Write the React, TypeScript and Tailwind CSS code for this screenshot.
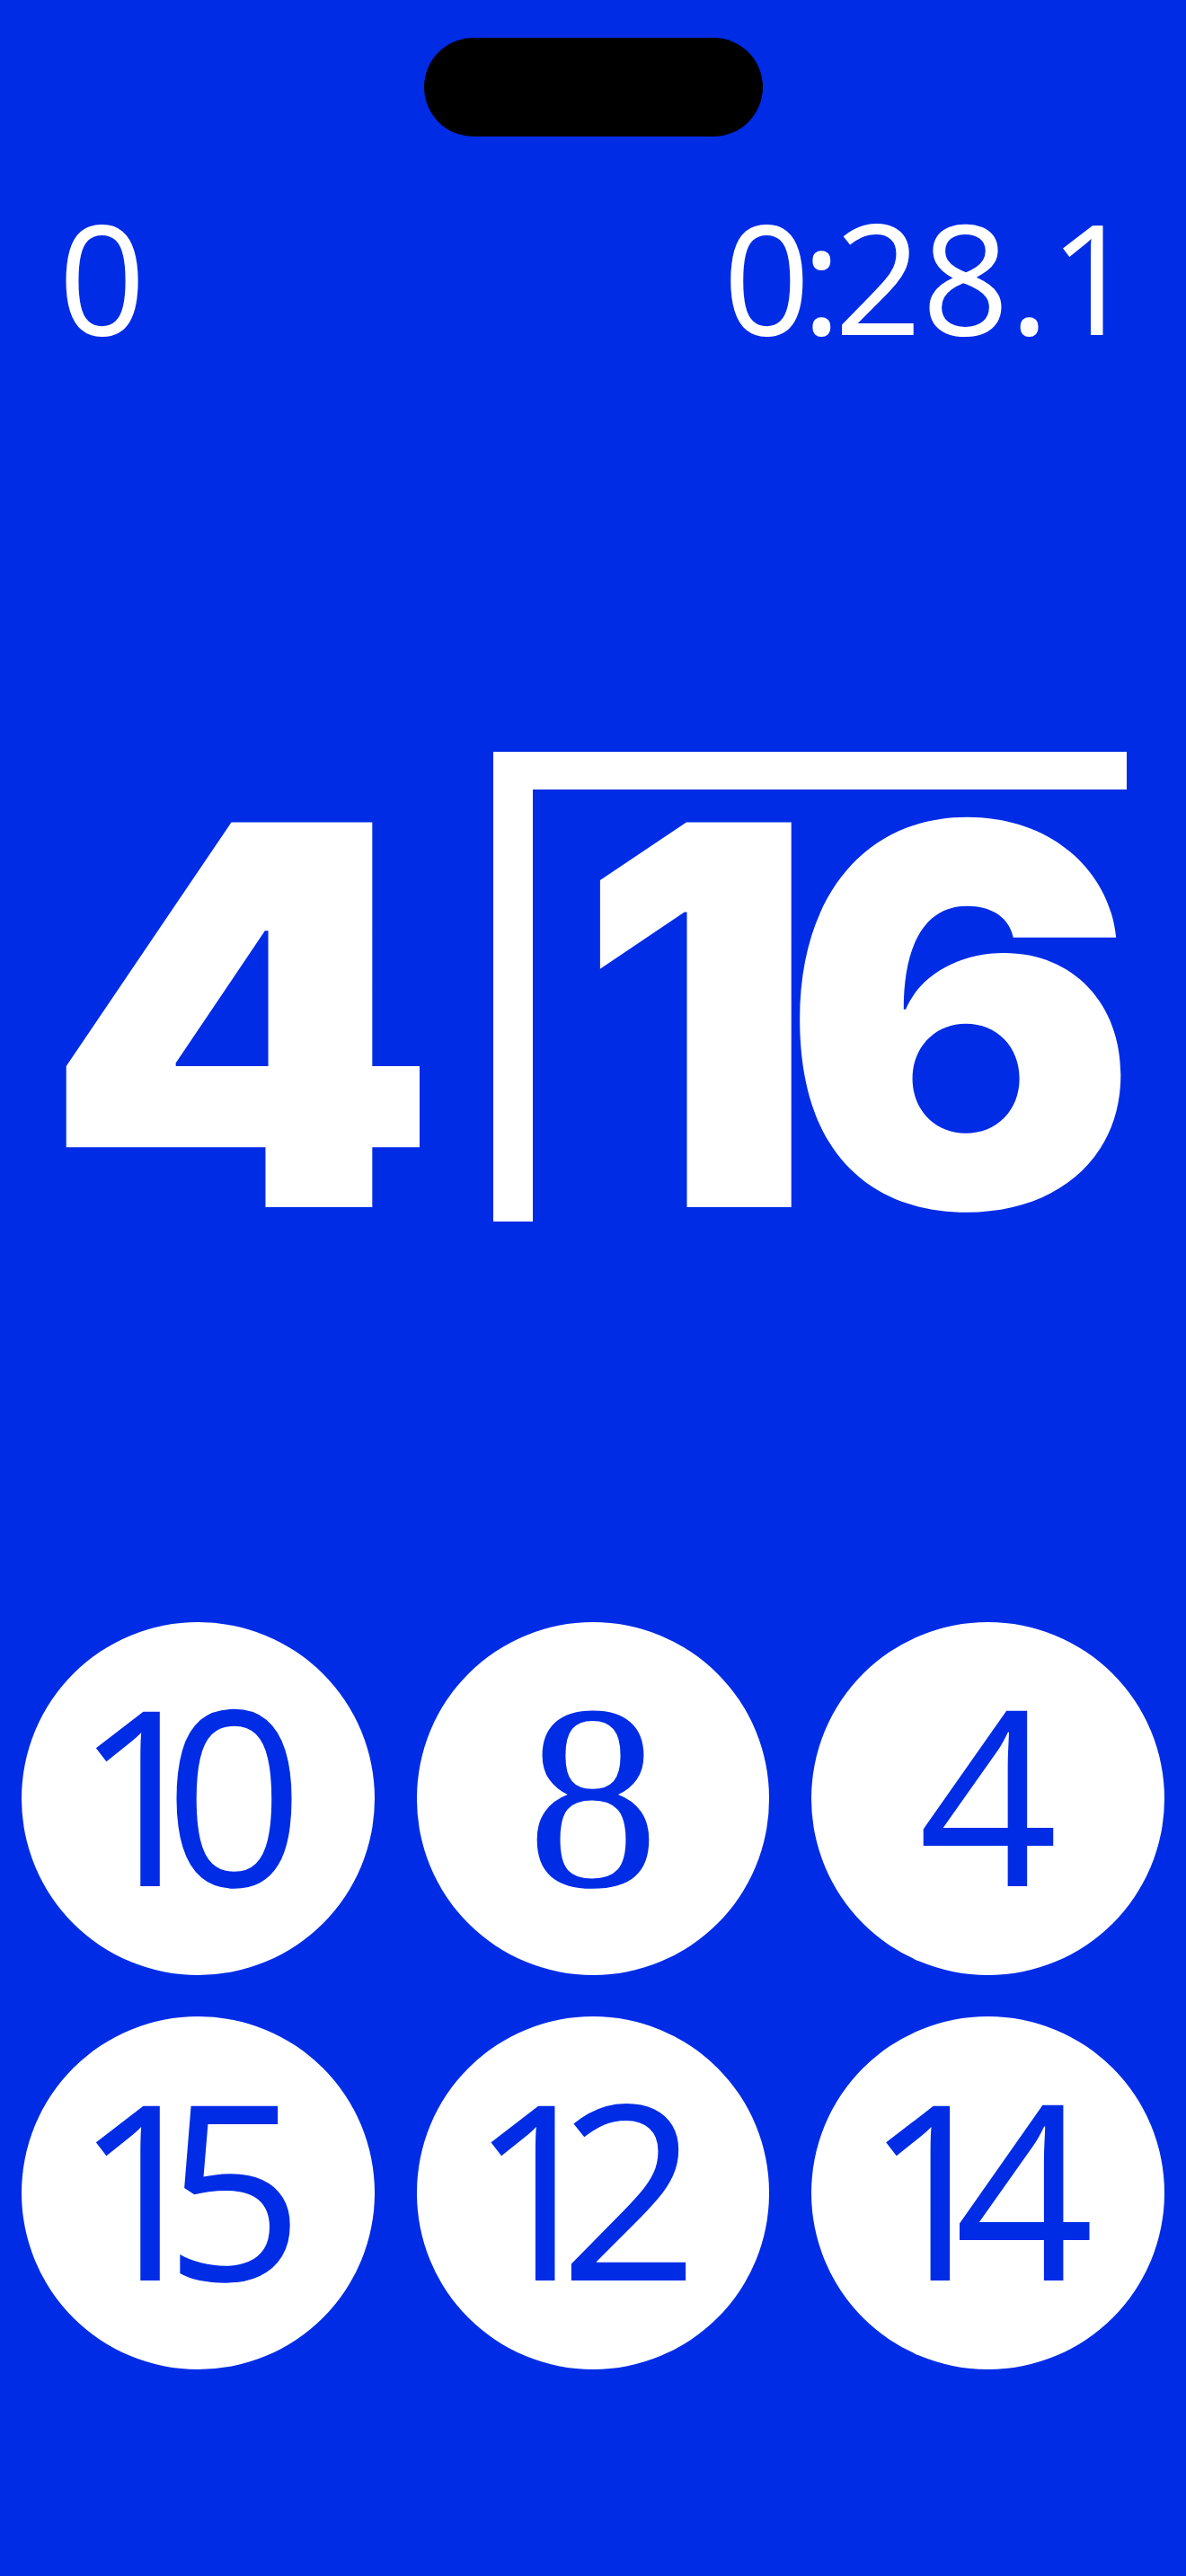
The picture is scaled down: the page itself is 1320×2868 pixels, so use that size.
import React from "react";

const tiles: { value: string; serif?: boolean }[] = [
  { value: "10" },
  { value: "8", serif: true },
  { value: "4" },
  { value: "15" },
  { value: "12" },
  { value: "14" },
];

function Tile({ value, serif }: { value: string; serif?: boolean }) {
  if (serif) {
    return (
      <button className="flex h-[393px] w-full items-center justify-center rounded-full bg-white">
        <span className="pb-[4px] font-['Liberation_Serif',serif] text-[294px] leading-none text-[#002ce6]">
          {value}
        </span>
      </button>
    );
  }

  const [first, ...rest] = value.split("");
  return (
    <button className="flex h-[393px] w-full items-center justify-center rounded-full bg-white">
      <span
        className={`pb-[16px] font-['Open_Sans',sans-serif] text-[272px] leading-none text-[#002ce6] ${
          rest.length ? "pr-[20px]" : ""
        }`}
      >
        {/* the leading 1 sits tight against the next digit */}
        <span className={rest.length ? "tracking-[-55px]" : ""}>{first}</span>
        {rest.join("")}
      </span>
    </button>
  );
}

export default function App() {
  return (
    <div className="flex h-[2868px] w-[1320px] flex-col overflow-hidden bg-[#002ce6]">
      {/* dynamic island */}
      <div className="mx-auto mt-[42px] h-[110px] w-[377px] shrink-0 rounded-full bg-black" />

      {/* score + timer */}
      <div className="mt-[70px] flex h-[170px] items-start justify-between pl-[65px] pr-[55px] font-['Open_Sans',sans-serif] text-[170px] leading-none text-white">
        <span>0</span>
        <span>
          <span className="tracking-[-10px]">0</span>
          <span className="tracking-[-8px]">:</span>
          28.1
        </span>
      </div>

      {/* long division */}
      <div className="mt-[443px] flex h-[589px] items-start font-['Inter',sans-serif] text-white">
        <div className="w-[549px] shrink-0 pl-[48px]">
          <span className="inline-block origin-left scale-x-[1.065] text-[589px] font-black leading-none tracking-[-0.04em]">
            4
          </span>
        </div>
        <div className="mt-[2px] flex h-[523px] w-[705px] shrink-0 items-start border-l-[44px] border-t-[42px] border-white">
          <span className="-mt-[44px] ml-[49px] text-[589px] font-black leading-none tracking-[-0.065em]">
            16
          </span>
        </div>
      </div>

      {/* answer choices */}
      <div className="mt-[382px] grid grid-cols-3 gap-x-[47px] gap-y-[46px] px-[24px]">
        {tiles.map((t) => (
          <Tile key={t.value} value={t.value} serif={t.serif} />
        ))}
      </div>
    </div>
  );
}
